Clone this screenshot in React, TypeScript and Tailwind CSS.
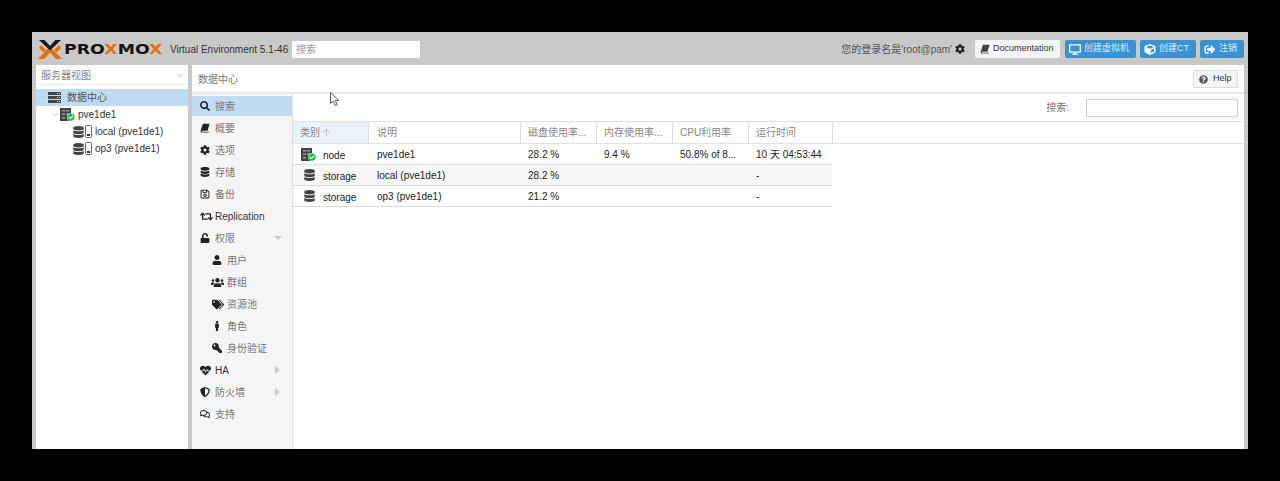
import { FaSearch, FaCog, FaDatabase, FaRegSave, FaRetweet, FaUnlock, FaUser, FaUsers, FaTags, FaMale, FaKey, FaHeartbeat, FaShieldAlt, FaRegComments, FaDesktop, FaCube, FaSignOutAlt, FaQuestionCircle, FaCheckCircle } from "react-icons/fa";
import { ArrowUp, ChevronDown } from "lucide-react";

const FONT = "font-['Liberation_Sans','Noto_Sans_CJK_SC',sans-serif]";

type IconType = React.ComponentType<{ className?: string }>;
type MenuItem = { label: string; icon: IconType; iconCls?: string; sub?: boolean; active?: boolean; dark?: boolean; arrow?: "down" | "right" };

function SlantBook({ className }: { className?: string }) {
  return (
    <svg viewBox="0 0 12 12" className={className}>
      <path d="M3.500 1H11.500L9 9.300H2.800C2.200 9.300 2 9.800 2.300 10.200 2.500 10.500 2.900 10.500 3.300 10.500H9.800L10.500 9.500 10.300 11.500H2.500C1.300 11.500 0.500 10.500 0.800 9.200z" fill="currentColor" />
    </svg>
  );
}

const MENU: MenuItem[] = [
  { label: "搜索", icon: FaSearch, active: true },
  { label: "概要", icon: SlantBook },
  { label: "选项", icon: FaCog },
  { label: "存储", icon: FaDatabase },
  { label: "备份", icon: FaRegSave },
  { label: "Replication", icon: FaRetweet, iconCls: "w-[13px] h-[11px]", dark: true },
  { label: "权限", icon: FaUnlock, arrow: "down" },
  { label: "用户", icon: FaUser, sub: true },
  { label: "群组", icon: FaUsers, iconCls: "w-[13px] h-[11px] -ml-[1px]", sub: true },
  { label: "资源池", icon: FaTags, iconCls: "w-[12px] h-[11px]", sub: true },
  { label: "角色", icon: FaMale, sub: true },
  { label: "身份验证", icon: FaKey, iconCls: "w-[10px] h-[10px] -scale-x-100", sub: true },
  { label: "HA", icon: FaHeartbeat, iconCls: "w-[13px] h-[11px] -ml-[1px]", arrow: "right", dark: true },
  { label: "防火墙", icon: FaShieldAlt, arrow: "right" },
  { label: "支持", icon: FaRegComments },
];

const COLS = [
  { label: "类别", w: "w-[76px]", pl: "pl-[7px]", sorted: true },
  { label: "说明", w: "w-[152px]", pl: "pl-[8px]" },
  { label: "磁盘使用率...", w: "w-[76px]", pl: "pl-[7px]" },
  { label: "内存使用率...", w: "w-[76px]", pl: "pl-[7px]" },
  { label: "CPU利用率", w: "w-[76px]", pl: "pl-[7px]" },
  { label: "运行时间", w: "w-[84px]", pl: "pl-[7px]" },
];

const ROWS = [
  { type: "node", desc: "pve1de1", disk: "28.2 %", mem: "9.4 %", cpu: "50.8% of 8...", up: "10 天 04:53:44" },
  { type: "storage", desc: "local (pve1de1)", disk: "28.2 %", mem: "", cpu: "", up: "-" },
  { type: "storage", desc: "op3 (pve1de1)", disk: "21.2 %", mem: "", cpu: "", up: "-" },
];

function LogoX({ className }: { className?: string }) {
  return (
    <svg viewBox="0 0 24 19" className={className}>
      <path d="M0 19h6l6-6.500 6 6.500h6L12 6.500z" fill="#e57000" />
      <path d="M3 5l5 5-2.500 2.500L1 8zM21 5l-5 5 2.500 2.500L23 8z" fill="#e57000" />
      <path d="M1 0h5.500L12 6l5.500-6H23L12 10.500z" fill="#1a1a1a" />
    </svg>
  );
}

function NodeIcon() {
  return (
    <span className="relative inline-block w-[15px] h-[13px]">
      <svg viewBox="0 0 12 13" className="w-[12px] h-[13px]">
        <rect width="11" height="13" fill="#444" />
        <path d="M2 2h3v1.500H2zM6 2h3v1.500H6zM2 5.500h3V7H2zM6 5.500h3V7H6zM2 9h3v1.500H2z" fill="#999" />
      </svg>
      <FaCheckCircle className="absolute right-0 bottom-0 w-[8px] h-[8px] text-[#21bf4b] bg-white rounded-full" />
    </span>
  );
}

function DatacenterIcon() {
  return (
    <svg viewBox="0 0 13 11" className="w-[13px] h-[11px]">
      <path d="M0 0h13v3H0zM0 4h13v3H0zM0 8h13v3H0z" fill="#444" />
      <path d="M9 1h1v1H9zM11 1h1v1h-1zM9 5h1v1H9zM11 5h1v1h-1zM9 9h1v1H9zM11 9h1v1h-1z" fill="#ddd" />
    </svg>
  );
}

function PhoneIcon() {
  return (
    <svg viewBox="0 0 7 13" className="w-[7px] h-[13px]">
      <rect x="0.500" y="0.500" width="6" height="12" rx="1" fill="#fff" stroke="#666" />
      <rect x="2" y="9" width="3" height="2" fill="#333" />
    </svg>
  );
}

function Cursor() {
  return (
    <svg viewBox="0 0 11 15" className="absolute left-[330px] top-[92px] w-[11px] h-[15px]">
      <path d="M0.500 0.500v11l2.800-2.400 1.800 4.400 2-0.900-1.800-4.200h3.500z" fill="#fff" stroke="#333" strokeWidth="0.800" />
    </svg>
  );
}

function HeaderButton({ icon: Icon, label, width }: { icon: IconType; label: string; width: string }) {
  return (
    <div className={`flex items-center h-[18px] ${width} pl-[4px] gap-[3px] rounded-[2px] bg-[#3892d4] text-[9px] text-[#dcecf7] whitespace-nowrap`}>
      <Icon className="w-[12px] h-[11px] text-white shrink-0" />
      {label}
    </div>
  );
}

function AppHeader() {
  return (
    <div className="h-[33px] shrink-0 flex items-center bg-[#c9c9c9] pt-[1px] pl-[6px] pr-[4px]">
      <div className="flex items-center w-[126px] h-[19px] overflow-hidden">
        <LogoX className="w-[24px] h-[19px] shrink-0" />
        <span className="ml-[2px] text-[14px] leading-none font-bold text-[#151515] font-['DejaVu_Sans',sans-serif] scale-x-[1.24] origin-left whitespace-nowrap">
          PRO<span className="text-[#e57000]">X</span>MO<span className="text-[#e57000]">X</span>
        </span>
      </div>
      <span className="ml-[6px] w-[122px] text-[10px] text-[#333] whitespace-nowrap">Virtual Environment 5.1-46</span>
      <div className="w-[128px] h-[17px] bg-white pl-[4px] text-[10px] leading-[17px] text-[#999]">搜索</div>
      <div className="ml-auto flex items-center">
        <span className="text-[10px] text-[#555] whitespace-nowrap">您的登录名是'root@pam'</span>
        <FaCog className="ml-[3px] w-[10px] h-[10px] text-[#222]" />
        <div className="ml-[10px] flex items-center h-[18px] w-[85px] pl-[5px] gap-[3px] bg-[#f5f5f5] rounded-[2px] text-[9px] text-[#333]">
          <SlantBook className="w-[10px] h-[10px] text-[#444]" />
          Documentation
        </div>
        <div className="ml-[5px] flex gap-[4px]">
          <HeaderButton icon={FaDesktop} label="创建虚拟机" width="w-[71px]" />
          <HeaderButton icon={FaCube} label="创建CT" width="w-[56px]" />
          <HeaderButton icon={FaSignOutAlt} label="注销" width="w-[44px]" />
        </div>
      </div>
    </div>
  );
}

function TreeRow({ indent, icon, label, active, caret }: { indent: string; icon: React.ReactNode; label: string; active?: boolean; caret?: boolean }) {
  return (
    <div className={`flex items-center h-[17px] ${indent} ${active ? "bg-[#c0dbf2]" : ""}`}>
      {caret && <ChevronDown className="w-[9px] h-[9px] text-[#aaa]" strokeWidth={1.500} />}
      {icon}
      <span className={`text-[10px] whitespace-nowrap ${active ? "text-[#555] ml-[6px]" : "text-[#333] ml-[3px]"}`}>{label}</span>
    </div>
  );
}

function StorageIcons() {
  return (
    <span className="flex items-center gap-[1px]">
      <FaDatabase className="w-[11px] h-[12px] text-[#444]" />
      <PhoneIcon />
    </span>
  );
}

function LeftPanel() {
  return (
    <div className="w-[152px] shrink-0 bg-white flex flex-col pt-[1px]">
      <div className="h-[19px] flex items-center justify-between pl-[5px] pr-[3px] text-[10px] text-[#888] border-b border-[#e6e6e6]">
        服务器视图
        <ChevronDown className="w-[11px] h-[11px] text-[#aaa]" strokeWidth={1.500} />
      </div>
      <div className="mt-[4px]">
        <TreeRow indent="pl-[3px]" caret active icon={<DatacenterIcon />} label="数据中心" />
        <TreeRow indent="pl-[15px]" caret icon={<NodeIcon />} label="pve1de1" />
        <TreeRow indent="pl-[37px]" icon={<StorageIcons />} label="local (pve1de1)" />
        <TreeRow indent="pl-[37px]" icon={<StorageIcons />} label="op3 (pve1de1)" />
      </div>
    </div>
  );
}

function SideMenu() {
  return (
    <div className="w-[101px] shrink-0 bg-[#f5f5f5] border-r border-[#dcdcdc] pt-[1px]">
      {MENU.map((m) => {
        const Icon = m.icon;
        return (
          <div key={m.label} className="py-[1px]">
            <div className={`relative flex items-center h-[20px] ${m.sub ? "pl-[20px]" : "pl-[8px]"} ${m.active ? "bg-[#c0dbf2]" : ""}`}>
              <span className="w-[15px] flex justify-start shrink-0">
                <Icon className={`text-[#222] ${m.iconCls ?? "w-[10px] h-[10px]"}`} />
              </span>
              <span className={`text-[10px] whitespace-nowrap ${m.dark ? "text-[#333]" : "text-[#777]"}`}>{m.label}</span>
              {m.arrow === "down" && <span className="absolute left-[82px] top-[8px] w-0 h-0 border-x-[4px] border-x-transparent border-t-[4px] border-t-[#ccc]" />}
              {m.arrow === "right" && <span className="absolute left-[83px] top-[6px] w-0 h-0 border-y-[4px] border-y-transparent border-l-[5px] border-l-[#ccc]" />}
            </div>
          </div>
        );
      })}
    </div>
  );
}

function ResultGrid() {
  return (
    <div className="flex-1 flex flex-col min-w-0 bg-white">
      <div className="h-[27px] shrink-0 flex items-center justify-end pr-[6px]">
        <span className="text-[10px] text-[#777] mr-[17px]">搜索:</span>
        <div className="w-[152px] h-[18px] bg-white border border-[#cfcfcf]" />
      </div>
      <div className="h-[23px] shrink-0 flex border-t border-b border-[#e2e2e2]">
        {COLS.map((c) => (
          <div key={c.label} className={`${c.w} ${c.pl} shrink-0 flex items-center ${c.sorted ? "bg-[#eaf3fa]" : ""} text-[10px] text-[#888] border-r border-[#dcdcdc] whitespace-nowrap`}>
            {c.label}
            {c.sorted && <ArrowUp className="ml-[1px] w-[11px] h-[11px] text-[#888]" strokeWidth={1} />}
          </div>
        ))}
      </div>
      <div className="w-[539px]">
        {ROWS.map((r, i) => (
          <div key={r.desc} className={`flex h-[21px] items-center border-b border-[#dcdcdc] text-[10px] text-[#222] ${i === 1 ? "bg-[#f7f7f7]" : ""}`}>
            <div className="w-[76px] shrink-0 flex items-center pl-[8px]">
              <span className="w-[22px] flex justify-start">
                {r.type === "node" ? <NodeIcon /> : <FaDatabase className="ml-[3px] w-[11px] h-[12px] text-[#444]" />}
              </span>
              <span className="relative top-[1px]">{r.type}</span>
            </div>
            <div className="w-[152px] shrink-0 pl-[8px]">{r.desc}</div>
            <div className="w-[76px] shrink-0 pl-[7px]">{r.disk}</div>
            <div className="w-[76px] shrink-0 pl-[7px]">{r.mem}</div>
            <div className="w-[76px] shrink-0 pl-[7px] whitespace-nowrap">{r.cpu}</div>
            <div className="w-[83px] shrink-0 pl-[7px] whitespace-nowrap">{r.up}</div>
          </div>
        ))}
      </div>
    </div>
  );
}

export default function App() {
  return (
    <div className={`relative w-[1280px] h-[481px] bg-black pt-[32px] pl-[32px] ${FONT}`}>
      <div className="w-[1216px] h-[417px] bg-[#c9c9c9] flex flex-col">
        <AppHeader />
        <div className="flex-1 flex pl-[4px] pr-[4px] min-h-0">
          <LeftPanel />
          <div className="w-[4px] shrink-0 bg-[#c9c9c9]" />
          <div className="flex-1 flex flex-col min-w-0">
            <div className="h-[29px] shrink-0 bg-white flex items-center justify-between pt-[1px] pl-[6px] pr-[6px] border-b-2 border-[#e8e8e8]">
              <span className="text-[10px] text-[#777]">数据中心</span>
              <div className="flex items-center gap-[5px] h-[18px] w-[45px] pl-[5px] rounded-[2px] bg-[#f5f5f5] border border-[#dcdcdc] text-[9px] text-[#333]">
                <FaQuestionCircle className="w-[9px] h-[9px] text-[#555]" />
                Help
              </div>
            </div>
            <div className="flex-1 flex min-h-0">
              <SideMenu />
              <ResultGrid />
            </div>
          </div>
        </div>
      </div>
      <Cursor />
    </div>
  );
}
